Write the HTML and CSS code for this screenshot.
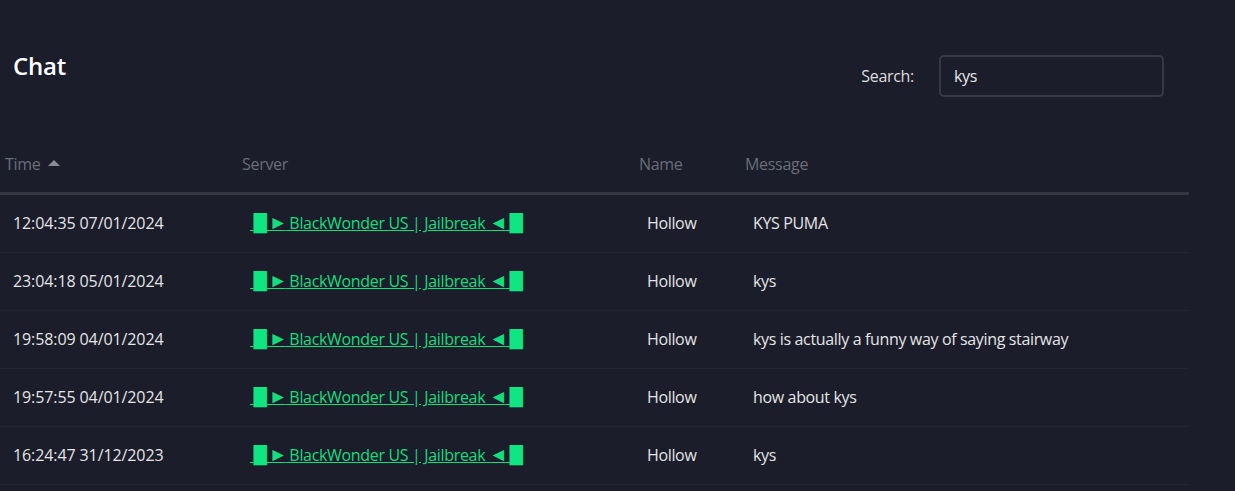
FILE: index.html
```html
<!DOCTYPE html>
<html lang="en">
<head>
<meta charset="utf-8">
<title>Chat</title>
<link rel="stylesheet" href="styles.css">
</head>
<body>
<div class="page">
  <div class="topbar">
    <h1 class="title">Chat</h1>
    <label class="search">
      <span class="search-label">Search:</span>
      <input class="search-input" type="text" value="kys">
    </label>
  </div>
  <table class="chat-table">
    <colgroup>
      <col class="c-time"><col class="c-server"><col class="c-name"><col class="c-msg">
    </colgroup>
    <thead>
      <tr>
        <th>Time <span class="sort"></span></th>
        <th>Server</th>
        <th>Name</th>
        <th>Message</th>
      </tr>
    </thead>
    <tbody>
      <tr>
        <td class="time">12:04:35 07/01/2024</td>
        <td><a class="server" href="#"> <span class="blk">█</span> <span class="tri tri-r">►</span> BlackWonder US | Jailbreak <span class="tri">◄</span> <span class="blk">█</span></a></td>
        <td>Hollow</td>
        <td>KYS PUMA</td>
      </tr>
      <tr>
        <td class="time">23:04:18 05/01/2024</td>
        <td><a class="server" href="#"> <span class="blk">█</span> <span class="tri tri-r">►</span> BlackWonder US | Jailbreak <span class="tri">◄</span> <span class="blk">█</span></a></td>
        <td>Hollow</td>
        <td>kys</td>
      </tr>
      <tr>
        <td class="time">19:58:09 04/01/2024</td>
        <td><a class="server" href="#"> <span class="blk">█</span> <span class="tri tri-r">►</span> BlackWonder US | Jailbreak <span class="tri">◄</span> <span class="blk">█</span></a></td>
        <td>Hollow</td>
        <td>kys is actually a funny way of saying stairway</td>
      </tr>
      <tr>
        <td class="time">19:57:55 04/01/2024</td>
        <td><a class="server" href="#"> <span class="blk">█</span> <span class="tri tri-r">►</span> BlackWonder US | Jailbreak <span class="tri">◄</span> <span class="blk">█</span></a></td>
        <td>Hollow</td>
        <td>how about kys</td>
      </tr>
      <tr>
        <td class="time">16:24:47 31/12/2023</td>
        <td><a class="server" href="#"> <span class="blk">█</span> <span class="tri tri-r">►</span> BlackWonder US | Jailbreak <span class="tri">◄</span> <span class="blk">█</span></a></td>
        <td>Hollow</td>
        <td>kys</td>
      </tr>
    </tbody>
  </table>
</div>
</body>
</html>
```

FILE: styles.css
```css
html, body {
  margin: 0;
  padding: 0;
  background: #1b1d2a;
  overflow: hidden;
}
body {
  font-family: "Open Sans", "Liberation Sans", sans-serif;
  font-size: 16px;
  color: #e4e4e6;
}
.page {
  width: 1189px;
}
.topbar {
  display: flex;
  justify-content: space-between;
  align-items: flex-start;
  height: 137px;
}
.title {
  margin: 50px 0 0 13px;
  font-size: 24px;
  line-height: 32px;
  font-weight: 600;
  color: #ffffff;
  letter-spacing: -0.2px;
}
.search {
  display: flex;
  align-items: center;
  gap: 25px;
  margin-top: 55px;
  margin-right: 25px;
}
.search-label {
  color: #dcdcdf;
  font-size: 16px;
  letter-spacing: -0.3px;
}
.search-input {
  box-sizing: border-box;
  width: 225px;
  height: 42px;
  background: #1b1d2a;
  border: 2px solid #363843;
  border-radius: 5px;
  padding: 0 13px;
  font-family: "Open Sans", "Liberation Sans", sans-serif;
  font-size: 16px;
  letter-spacing: -0.3px;
  color: #e8e8ea;
  outline: none;
}
.chat-table {
  width: 1189px;
  border-collapse: collapse;
  table-layout: fixed;
}
.c-time { width: 237px; }
.c-server { width: 397px; }
.c-name { width: 106px; }
.chat-table th {
  text-align: left;
  font-weight: 400;
  color: #6a6d78;
  padding: 16px 5px;
  line-height: 23px;
  height: 23px;
  border-bottom: 3px solid #35363f;
  white-space: nowrap;
  letter-spacing: -0.3px;
}
.sort {
  display: inline-block;
  width: 0;
  height: 0;
  border-left: 6px solid transparent;
  border-right: 6px solid transparent;
  border-bottom: 6px solid #8a8c95;
  margin-left: 4px;
  vertical-align: 4px;
}
.chat-table td {
  box-sizing: content-box;
  padding: 17px 13px;
  line-height: 23px;
  height: 23px;
  border-bottom: 1px solid #222431;
  white-space: nowrap;
  color: #e4e4e6;
  letter-spacing: -0.35px;
}
.chat-table td.time {
  letter-spacing: -0.1px;
}
.server {
  color: #14de7c;
  text-decoration: underline;
  white-space: pre;
  letter-spacing: -0.33px;
}
.blk {
  font-family: "DejaVu Sans", sans-serif;
  font-size: 17px;
  line-height: 0;
  color: #0fe681;
  letter-spacing: 0;
}
.tri {
  font-family: "Liberation Sans", sans-serif;
  font-size: 19px;
  line-height: 0;
  letter-spacing: -2px;
}
.tri-r {
  margin-left: -2px;
}
```
